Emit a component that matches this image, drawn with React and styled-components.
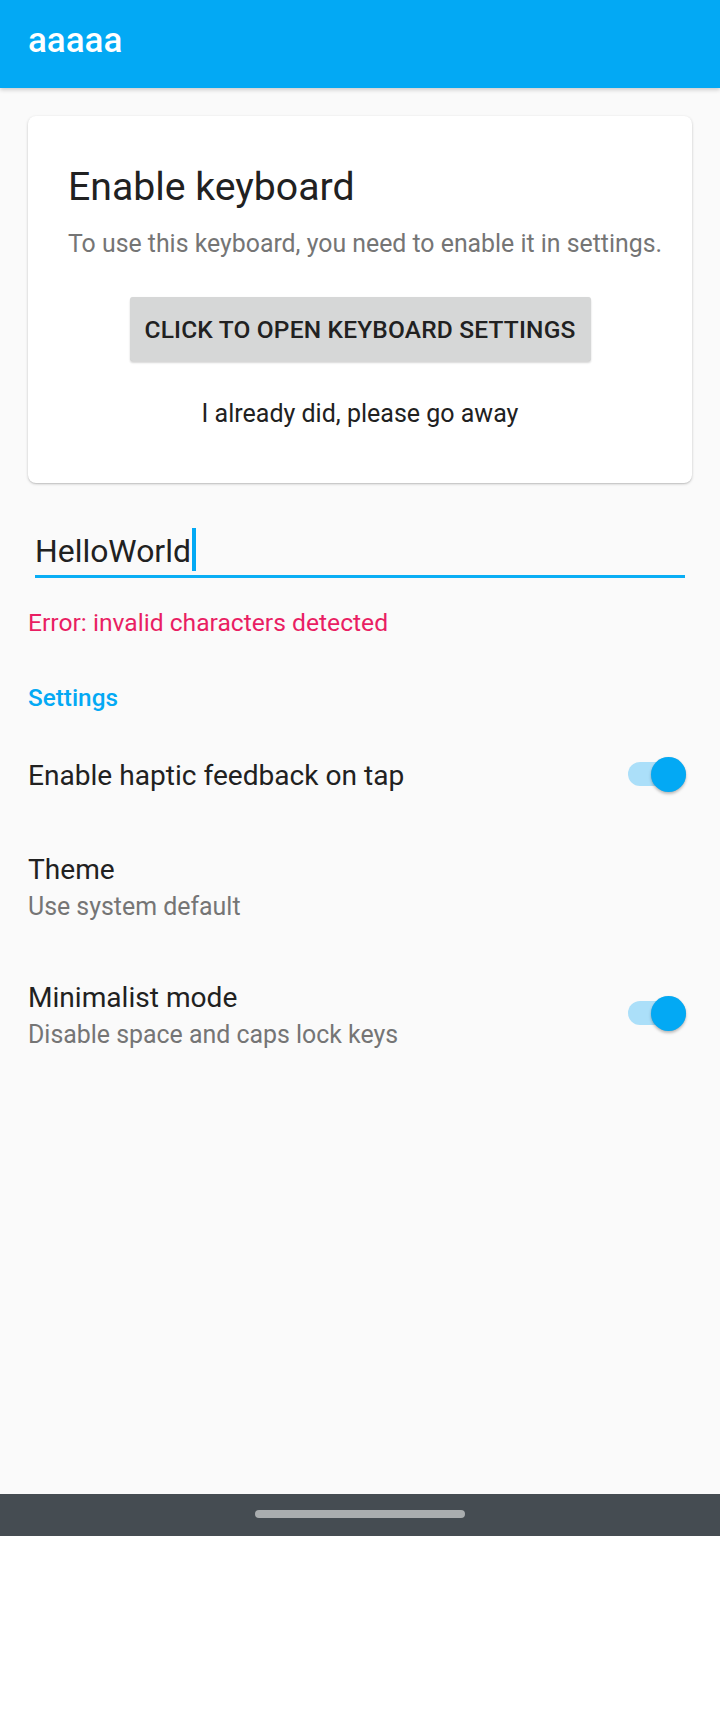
import React from "react";
import styled, { createGlobalStyle } from "styled-components";

const GlobalStyle = createGlobalStyle`
  html, body {
    margin: 0;
    padding: 0;
    background: #ffffff;
    font-family: Roboto, "Liberation Sans", Arial, sans-serif;
    -webkit-font-smoothing: antialiased;
  }
  * { box-sizing: border-box; }
`;

const Screen = styled.div`
  height: 1494px;
  background: #fafafa;
  display: flex;
  flex-direction: column;
  overflow: hidden;
`;

const AppBar = styled.header`
  height: 88px;
  flex: none;
  background: #03a9f4;
  display: flex;
  align-items: center;
  padding: 0 28px 6px;
  box-shadow: 0 2px 4px rgba(0, 0, 0, 0.18);
  position: relative;
  z-index: 1;
`;

const AppTitle = styled.h1`
  margin: 0;
  font-size: 35px;
  font-weight: 500;
  line-height: 40px;
  color: #ffffff;
`;

const Content = styled.main`
  padding: 28px 28px 0;
  display: flex;
  flex-direction: column;
`;

const Card = styled.section`
  background: #ffffff;
  border-radius: 8px;
  box-shadow: 0 1px 3px rgba(0, 0, 0, 0.2), 0 1px 1px rgba(0, 0, 0, 0.08);
  padding: 47.5px 40px 52.5px;
  display: flex;
  flex-direction: column;
  align-items: flex-start;
`;

const CardTitle = styled.h2`
  margin: 0;
  font-size: 39.2px;
  font-weight: 400;
  line-height: 46px;
  color: #212121;
`;

const CardText = styled.p`
  margin: 18.6px 0 0;
  font-size: 24.85px;
  line-height: 32px;
  color: #757575;
  white-space: nowrap;
`;

const RaisedButton = styled.button`
  align-self: center;
  margin-top: 36.8px;
  width: 461px;
  height: 64px;
  border: none;
  border-radius: 3px;
  background: #d6d7d7;
  box-shadow: 0 2px 2px rgba(0, 0, 0, 0.16), 0 0 1px rgba(0, 0, 0, 0.1);
  font-family: Roboto, "Liberation Sans", Arial, sans-serif;
  font-size: 24.5px;
  font-weight: 500;
  letter-spacing: 0.18px;
  line-height: 62px;
  padding: 2px 0 0;
  color: #212121;
  text-transform: uppercase;
`;

const TextButton = styled.button`
  align-self: center;
  margin-top: 37.5px;
  border: none;
  background: transparent;
  padding: 0;
  font-family: Roboto, "Liberation Sans", Arial, sans-serif;
  font-size: 25px;
  line-height: 32px;
  color: #212121;
`;

const Field = styled.div`
  margin: 44.8px 7px 0;
  padding-bottom: 1px;
  border-bottom: 3px solid #0aaef5;
  font-size: 31.9px;
  line-height: 46px;
  color: #212121;
`;

const Caret = styled.span`
  display: inline-block;
  width: 4px;
  height: 43px;
  margin-left: 1px;
  background: #03a9f4;
  vertical-align: -9px;
`;

const ErrorText = styled.div`
  margin-top: 29.5px;
  font-size: 24.65px;
  line-height: 32px;
  color: #e91e63;
`;

const SectionHeader = styled.div`
  margin-top: 43.1px;
  font-size: 24.3px;
  font-weight: 500;
  line-height: 32px;
  color: #03a9f4;
`;

const PrefList = styled.div`
  margin-top: 44px;
  display: flex;
  flex-direction: column;
  gap: 57.7px;
`;

const PrefRow = styled.div`
  display: flex;
  align-items: center;
  justify-content: space-between;
`;

const PrefText = styled.div`
  display: flex;
  flex-direction: column;
  gap: 4px;
`;

const PrefTitle = styled.div`
  font-size: 28.1px;
  line-height: 36px;
  color: #212121;
`;

const PrefSummary = styled.div`
  font-size: 24.9px;
  line-height: 30px;
  color: #757575;
`;

const Switch = styled.div`
  position: relative;
  width: 58px;
  height: 24px;
  margin-right: 6px;
  margin-top: ${(p) => p.$shift || 0}px;
  border-radius: 12px;
  background: #abdff9;
  flex: none;
`;

const Thumb = styled.span`
  position: absolute;
  right: 0;
  top: 50%;
  width: 35px;
  height: 35px;
  margin-top: -17.5px;
  border-radius: 50%;
  background: #03a9f4;
  box-shadow: 0 2px 3px rgba(0, 0, 0, 0.25), 0 0 1px rgba(0, 0, 0, 0.12);
`;

const NavBar = styled.div`
  height: 42px;
  background: #454c52;
  display: flex;
  align-items: center;
  justify-content: center;
  padding-bottom: 2px;
`;

const Handle = styled.div`
  width: 210px;
  height: 8px;
  border-radius: 4px;
  background: #a9adaf;
`;

export default function App() {
  return (
    <>
      <GlobalStyle />
      <Screen>
        <AppBar>
          <AppTitle>aaaaa</AppTitle>
        </AppBar>
        <Content>
          <Card>
            <CardTitle>Enable keyboard</CardTitle>
            <CardText>To use this keyboard, you need to enable it in settings.</CardText>
            <RaisedButton>Click to open keyboard settings</RaisedButton>
            <TextButton>I already did, please go away</TextButton>
          </Card>
          <Field>
            HelloWorld<Caret />
          </Field>
          <ErrorText>Error: invalid characters detected</ErrorText>
          <SectionHeader>Settings</SectionHeader>
          <PrefList>
            <PrefRow>
              <PrefText>
                <PrefTitle>Enable haptic feedback on tap</PrefTitle>
              </PrefText>
              <Switch $shift={-3.8}>
                <Thumb />
              </Switch>
            </PrefRow>
            <PrefRow>
              <PrefText>
                <PrefTitle>Theme</PrefTitle>
                <PrefSummary>Use system default</PrefSummary>
              </PrefText>
            </PrefRow>
            <PrefRow>
              <PrefText>
                <PrefTitle>Minimalist mode</PrefTitle>
                <PrefSummary>Disable space and caps lock keys</PrefSummary>
              </PrefText>
              <Switch $shift={-2.9}>
                <Thumb />
              </Switch>
            </PrefRow>
          </PrefList>
        </Content>
      </Screen>
      <NavBar>
        <Handle />
      </NavBar>
    </>
  );
}
